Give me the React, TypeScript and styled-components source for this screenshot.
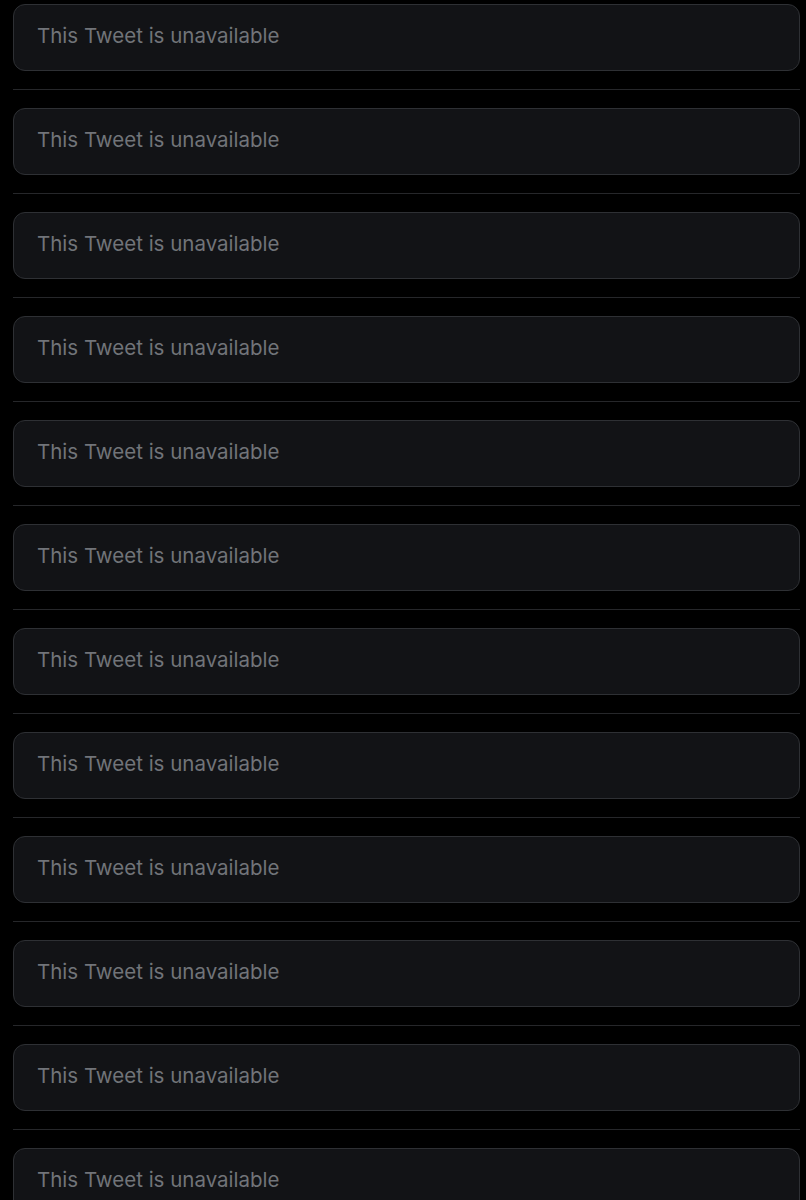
import { createGlobalStyle, styled } from "styled-components";

const GlobalStyle = createGlobalStyle`
    html, body {
        margin: 0;
        padding: 0;
        background-color: #000000;
    }

    body {
        font-family: Inter, "Noto Sans", sans-serif;
    }
`;

const ITEMS = Array.from({ length: 12 }, (_, i) => i);

function App() {
    return (
        <>
            <GlobalStyle />
            <Timeline>
                {ITEMS.map((i) => (
                    <Item key={i}>
                        <Unavailable>
                            <span>This Tweet is unavailable</span>
                        </Unavailable>
                    </Item>
                ))}
            </Timeline>
        </>
    );
}

const Timeline = styled.main`
    width: 100%;
    height: 1200px;
    overflow: hidden;
    padding-top: 4px;
    box-sizing: border-box;
    background-color: #000000;
`;

const Item = styled.section`
    margin: 0 6px 0 13px;
    padding-bottom: 18px;
    border-bottom: 1px solid #26272a;
    margin-bottom: 18px;

    &:last-child {
        border-bottom: none;
    }
`;

const Unavailable = styled.div`
    height: 67px;
    box-sizing: border-box;
    display: flex;
    align-items: center;
    padding: 0 23px;
    background-color: #121316;
    border: 1px solid #2e3034;
    border-radius: 12px;

    span {
        color: #717479;
        font-size: 20.5px;
        letter-spacing: 0;
        margin-top: -5px;
    }
`;

export default App;
